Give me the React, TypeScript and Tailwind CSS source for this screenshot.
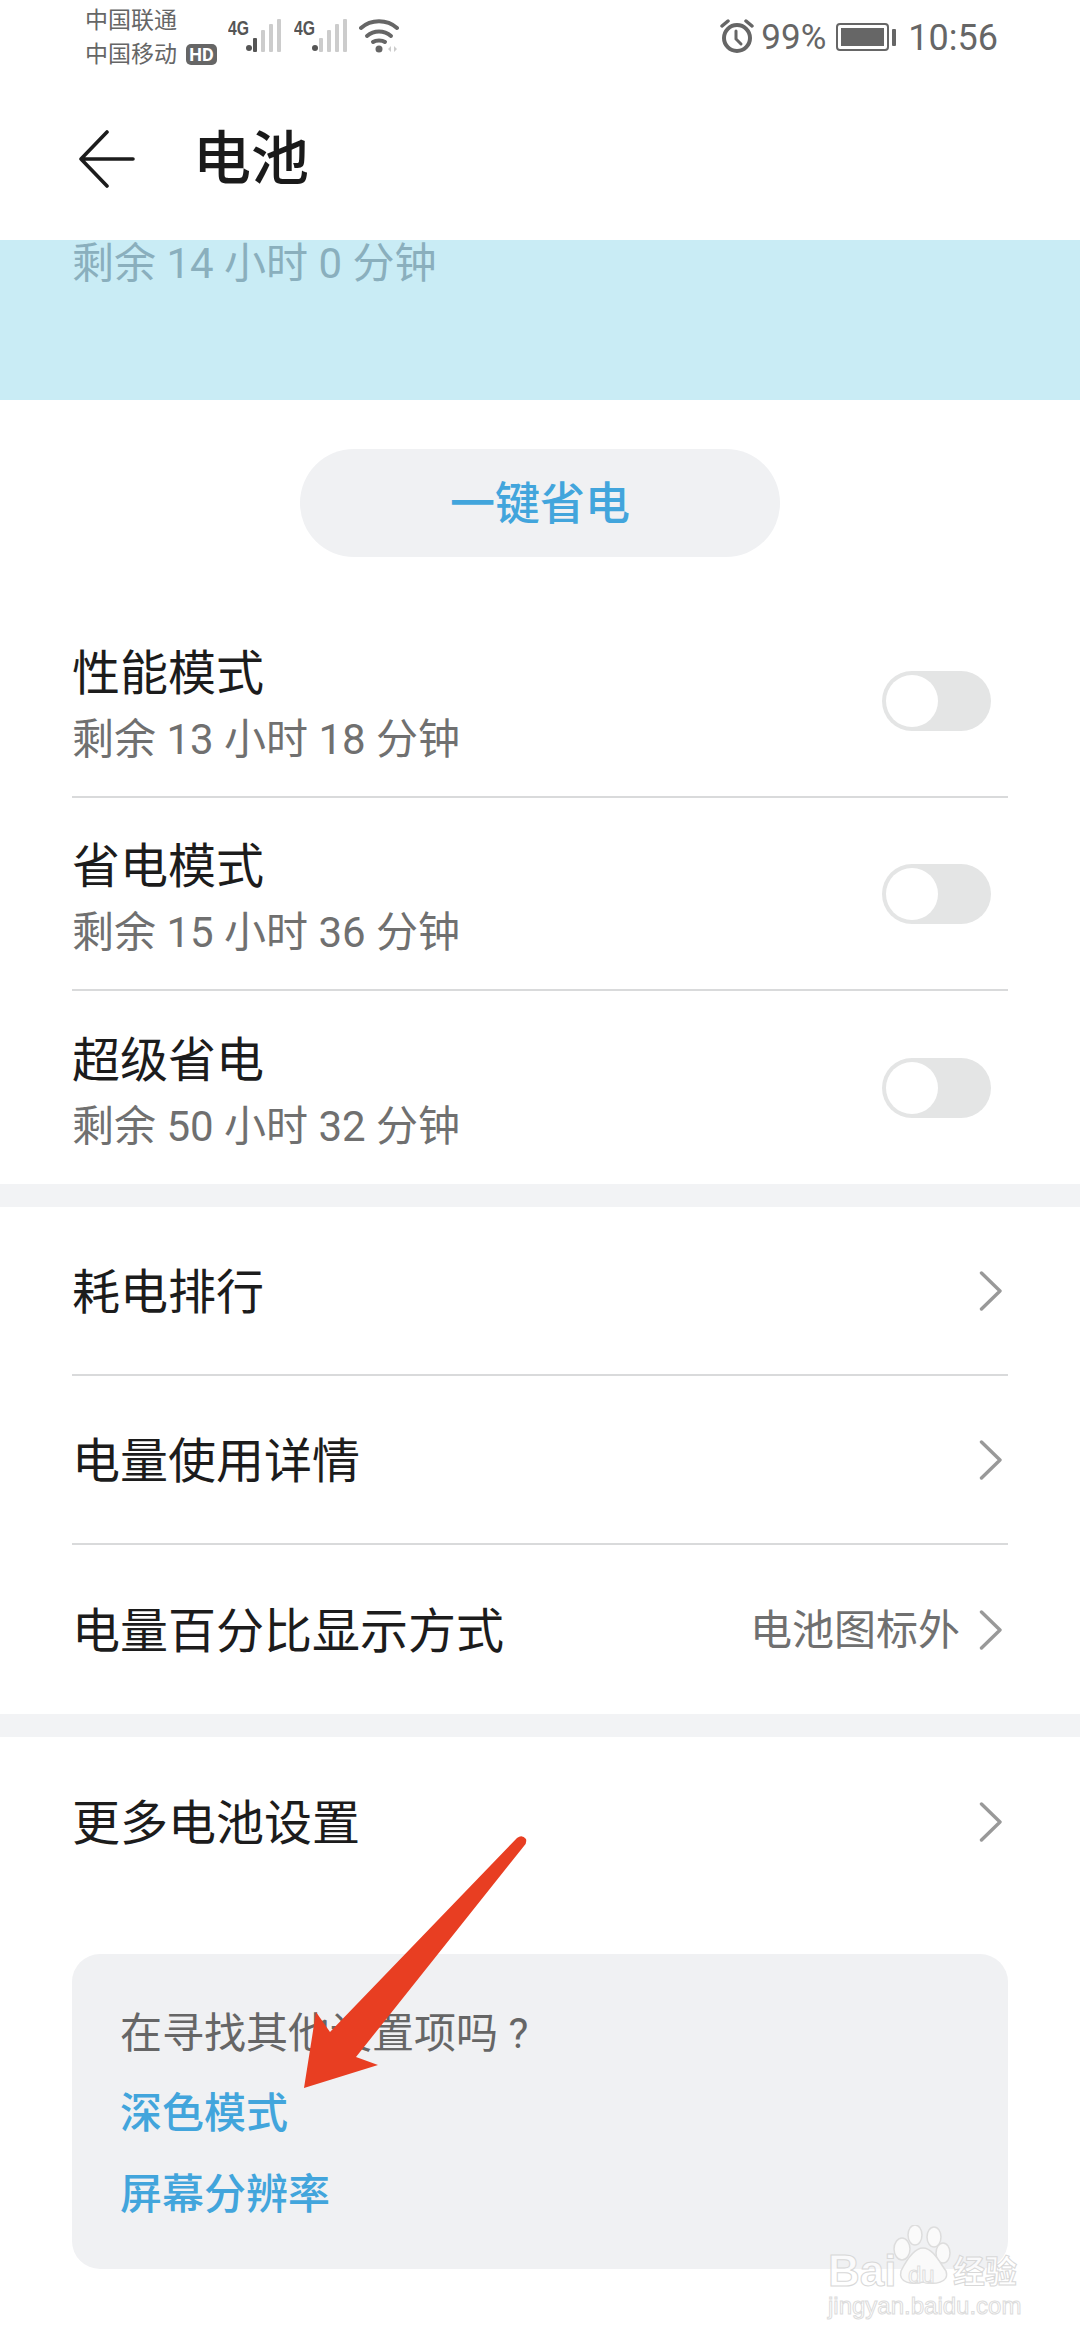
const FONT = "font-['Roboto','Noto_Sans_CJK_SC',sans-serif]"

function Signal({ level }: { level: number }) {
  const bars = [
    { x: 9, h: 14 },
    { x: 17, h: 22 },
    { x: 25, h: 28 },
    { x: 33, h: 33 },
  ]
  return (
    <svg width="37" height="34" viewBox="0 0 37 34" className="mt-[19px]">
      <circle cx="3" cy="29" r="3" fill="#555" />
      {bars.map((b, i) => (
        <rect
          key={b.x}
          x={b.x - 2}
          y={33 - b.h}
          width="4"
          height={b.h}
          rx="1"
          fill={i < level ? '#555' : '#ccc'}
        />
      ))}
    </svg>
  )
}

function FourG() {
  return (
    <span className="mt-[17px] w-[18px] origin-left scale-x-75 text-[21px] leading-[22px] font-bold text-[#555] font-['Liberation_Sans',sans-serif]">
      4G
    </span>
  )
}

function StatusBar() {
  return (
    <div className="flex h-[80px] text-[#666]">
      <div className="ml-[85px] w-[101px] pt-[4px] text-[23px] leading-[34px] whitespace-nowrap">
        <div>中国联通</div>
        <div>中国移动</div>
      </div>
      <span className="mt-[44px] h-[21px] w-[31px] rounded-[5px] bg-[#666] text-center text-[18px] leading-[21px] font-bold text-white">
        HD
      </span>
      <div className="ml-[11px] flex">
        <FourG />
        <Signal level={1} />
      </div>
      <div className="ml-[11px] flex">
        <FourG />
        <Signal level={0} />
      </div>
      <svg width="40" height="36" viewBox="0 0 40 36" className="mt-[18px] ml-[10px]" fill="none">
        <path d="M2 10 C12 1 28 1 38 10" stroke="#666" strokeWidth="4" strokeLinecap="round" />
        <path d="M8 18 C15 12 25 12 32 18" stroke="#666" strokeWidth="4" strokeLinecap="round" />
        <path d="M14 24 C17 22 23 22 26 24" stroke="#666" strokeWidth="4" strokeLinecap="round" />
        <circle cx="20" cy="31" r="3.5" fill="#666" />
        <path d="M29 31 l3 -3 v6 z M35 28 l3 3 l-3 3 z" fill="#ccc" />
      </svg>
      <div className="mr-[82px] ml-auto flex items-start">
        <svg width="34" height="34" viewBox="0 0 34 34" className="mt-[19px]" fill="none" stroke="#666">
          <circle cx="17" cy="19" r="13" strokeWidth="4" />
          <path d="M16 12 V20 L21 25" strokeWidth="3" strokeLinecap="round" />
          <path d="M2 7 L8 2 M32 7 L26 2" strokeWidth="3.5" strokeLinecap="round" />
        </svg>
        <span className="mt-[17px] ml-[7px] text-[35px] leading-[42px]">99%</span>
        <div className="mt-[23px] ml-[10px] flex items-center">
          <div className="h-[28px] w-[53px] rounded-[4px] border-2 border-[#666] p-[3px]">
            <div className="h-full w-full bg-[#666]" />
          </div>
          <div className="ml-[3px] h-[17px] w-[4px] rounded-[1px] bg-[#666]" />
        </div>
        <span className="mt-[17px] ml-[12px] text-[36px] leading-[42px]">10:56</span>
      </div>
    </div>
  )
}

function Toggle() {
  return (
    <div className="flex h-[60px] w-[109px] items-center rounded-full bg-[#e4e5e5] pl-[4px]">
      <div className="h-[52px] w-[52px] rounded-full bg-white" />
    </div>
  )
}

function Chevron() {
  return (
    <svg width="24" height="40" viewBox="0 0 24 40" fill="none" stroke="#999" strokeWidth="3.4" strokeLinecap="round" strokeLinejoin="round">
      <path d="M2.5 2 L21 20 L2.5 38" />
    </svg>
  )
}

function ModeRow({ title, left, last }: { title: string; left: string; last?: boolean }) {
  return (
    <div className={`flex h-[193px] items-center justify-between ${last ? '' : 'border-b-2 border-[#d9dadb]'}`}>
      <div className="pt-[8px]">
        <div className="text-[48px] leading-[64px] text-[#1c1c1c]">{title}</div>
        <div className="mt-[6px] text-[42px] leading-[56px] text-[#707070]">{left}</div>
      </div>
      <div className="mr-[17px]">
        <Toggle />
      </div>
    </div>
  )
}

function LinkRow({ title, value, last }: { title: string; value?: string; last?: boolean }) {
  return (
    <div className={`flex h-[169px] items-center pr-[5px] ${last ? '' : 'border-b-2 border-[#d9dadb]'}`}>
      <span className="mt-[5px] text-[48px] leading-[64px] text-[#1c1c1c]">{title}</span>
      {value && <span className="mt-[2px] ml-auto text-[42px] leading-[56px] text-[#707070]">{value}</span>}
      <div className={value ? 'ml-[19px]' : 'ml-auto'}>
        <Chevron />
      </div>
    </div>
  )
}

function Watermark() {
  return (
    <div className="absolute top-[2225px] left-[828px] h-[100px] w-[200px] font-['Liberation_Sans',sans-serif]">
      <span className="absolute top-[24px] left-0 text-[44px] leading-[44px] font-bold text-white/70 [-webkit-text-stroke:1px_#d8d8d8]">
        Bai
      </span>
      <svg className="absolute top-0 left-[52px]" width="80" height="66" viewBox="0 0 80 66" fill="#fafafa" stroke="#ddd" strokeWidth="1.5">
        <ellipse cx="22" cy="24" rx="8" ry="11" />
        <ellipse cx="35" cy="10" rx="7" ry="10" />
        <ellipse cx="54" cy="12" rx="7" ry="10" />
        <ellipse cx="63" cy="28" rx="7" ry="10" />
        <path d="M43 23 C53 23 60 38 66 46 C70 58 54 60 43 57 C32 60 18 58 21 46 C25 38 33 23 43 23 Z" />
      </svg>
      <span className="absolute top-[40px] left-[80px] text-[24px] leading-[20px] text-white [-webkit-text-stroke:1px_#dedede]">du</span>
      <span className="absolute top-[27px] left-[125px] text-[32px] leading-[34px] font-bold whitespace-nowrap text-white/70 [-webkit-text-stroke:1px_#d8d8d8] font-['Noto_Sans_CJK_SC',sans-serif]">
        经验
      </span>
      <span className="absolute top-[66px] left-0 text-[24px] leading-[30px] whitespace-nowrap text-white/60 [-webkit-text-stroke:1px_#dcdcdc]">
        jingyan.baidu.com
      </span>
    </div>
  )
}

export default function App() {
  return (
    <div className={`relative h-[2340px] w-[1080px] overflow-hidden bg-white ${FONT}`}>
      <StatusBar />

      <div className="flex h-[160px] items-center pb-[2px]">
        <svg width="56" height="58" viewBox="0 0 56 58" fill="none" className="ml-[79px]" stroke="#1c1c1c" strokeWidth="3.6" strokeLinecap="round" strokeLinejoin="round">
          <path d="M28 2 L2 29 L28 56 M2 29 H54" />
        </svg>
        <h1 className="ml-[58px] text-[58px] leading-[70px] font-medium text-[#1a1a1a]">电池</h1>
      </div>

      <div className="h-[160px] bg-[#c9ecf5] px-[72px]">
        <p className="text-[42px] leading-[48px] text-[#8aafbd]">剩余 14 小时 0 分钟</p>
      </div>

      <div className="flex justify-center pt-[49px] pb-[48px]">
        <button className="h-[108px] w-[480px] rounded-full bg-[#f0f1f3] pt-[3px] text-[45px] font-medium text-[#42a5dc]">
          一键省电
        </button>
      </div>

      <div className="px-[72px]">
        <ModeRow title="性能模式" left="剩余 13 小时 18 分钟" />
        <ModeRow title="省电模式" left="剩余 15 小时 36 分钟" />
        <ModeRow title="超级省电" left="剩余 50 小时 32 分钟" last />
      </div>

      <div className="h-[23px] bg-[#f2f3f5]" />

      <div className="px-[72px]">
        <LinkRow title="耗电排行" />
        <LinkRow title="电量使用详情" />
        <LinkRow title="电量百分比显示方式" value="电池图标外" last />
      </div>

      <div className="h-[23px] bg-[#f2f3f5]" />

      <div className="px-[72px]">
        <LinkRow title="更多电池设置" last />
        <div className="mt-[48px] h-[315px] rounded-[28px] bg-[#f0f1f3] px-[48px] pt-[55px]">
          <p className="text-[42px] leading-[50px] text-[#666]">在寻找其他设置项吗 ?</p>
          <p className="mt-[30px] text-[42px] leading-[50px] font-medium text-[#42a5dc]">深色模式</p>
          <p className="mt-[31px] text-[42px] leading-[50px] font-medium text-[#42a5dc]">屏幕分辨率</p>
        </div>
      </div>

      {/* annotation arrow over the screenshot */}
      <svg className="absolute top-0 left-0" width="1080" height="2340" fill="#e83e22">
        <path d="M517 1838 Q522 1834 526 1839 Q527 1843 524 1846 L356 2057 L378 2065 L304 2088 L316 2012 L330 2032 Z" />
      </svg>

      <Watermark />
    </div>
  )
}
